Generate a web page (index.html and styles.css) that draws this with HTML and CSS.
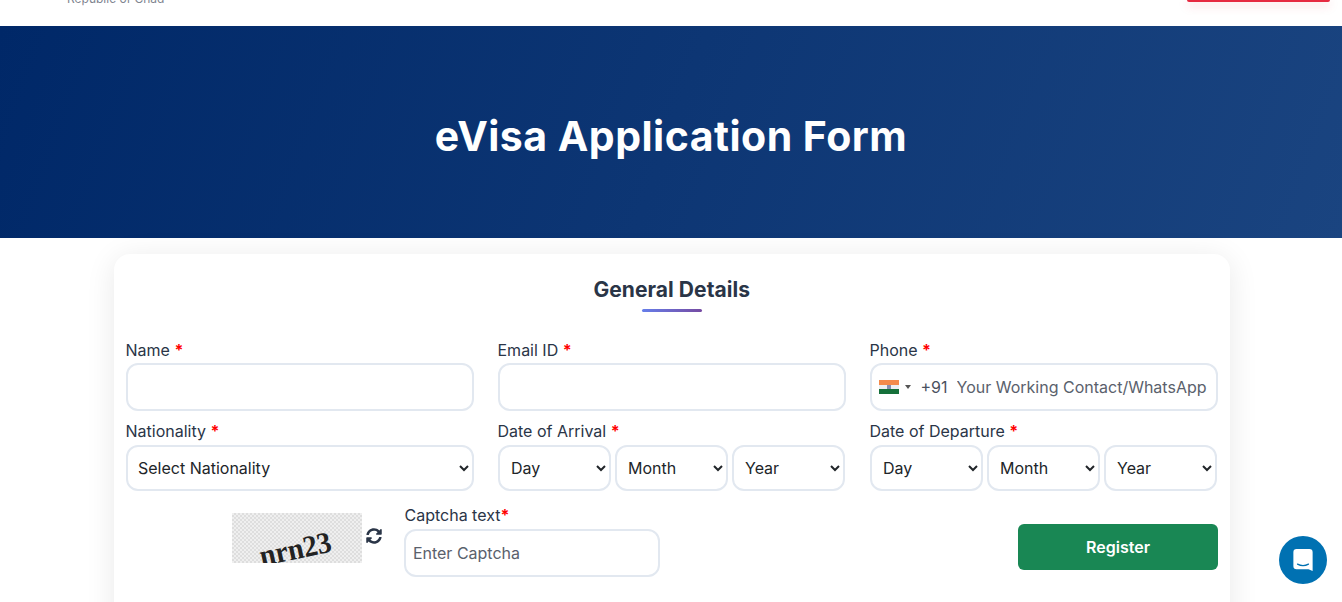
FILE: index.html
```html
<!DOCTYPE html>
<html lang="en">
  <head>
    <meta charset="UTF-8" />
    <meta name="viewport" content="width=device-width, initial-scale=1.0" />
    <title>eVisa Application Form</title>
    <link rel="stylesheet" href="styles.css">
  </head>
  <body>
    <header class="topbar">
      <div class="brand-sub">Republic of Chad</div>
      <div class="apply-btn"></div>
    </header>

    <section class="hero">
      <h1>eVisa Application Form</h1>
    </section>

    <main class="card">
      <h2 class="card-title">General Details</h2>
      <div class="title-rule"></div>

      <form class="form-grid">
        <div class="field">
          <label>Name <span class="req">*</span></label>
          <input class="control" type="text" />
        </div>
        <div class="field">
          <label>Email ID <span class="req">*</span></label>
          <input class="control" type="text" />
        </div>
        <div class="field">
          <label>Phone <span class="req">*</span></label>
          <div class="control phone">
            <span class="flag"><i class="saffron"></i><i class="white"></i><i class="green"></i></span>
            <span class="flag-arrow"></span>
            <span class="dial">+91</span>
            <input type="text" placeholder="Your Working Contact/WhatsApp" />
          </div>
        </div>

        <div class="field">
          <label>Nationality <span class="req">*</span></label>
          <select class="control select-full"><option>Select Nationality</option></select>
        </div>
        <div class="field">
          <label>Date of Arrival <span class="req">*</span></label>
          <div class="date-row">
            <select class="control"><option>Day</option></select>
            <select class="control"><option>Month</option></select>
            <select class="control"><option>Year</option></select>
          </div>
        </div>
        <div class="field">
          <label>Date of Departure <span class="req">*</span></label>
          <div class="date-row">
            <select class="control"><option>Day</option></select>
            <select class="control"><option>Month</option></select>
            <select class="control"><option>Year</option></select>
          </div>
        </div>
      </form>

      <div class="captcha-row">
        <div class="captcha-img"><span>nrn23</span></div>
        <svg class="refresh" viewBox="0 0 512 512" width="16" height="16">
          <path fill="#2a3547" d="M370.700 133.300C339.500 104 298.900 88 255.800 88c-77.500.1-144.300 53.200-162.800 126.900-1.300 5.400-6.100 9.100-11.600 9.100H24.100c-7.500 0-13.200-6.800-11.800-14.200C33.900 94.900 134.800 8 256 8c66.400 0 126.800 26.100 171.300 68.700L463 41C478.100 25.900 504 36.600 504 57.900V192c0 13.300-10.700 24-24 24H345.900c-21.400 0-32.100-25.900-17-41l41.800-41.700zM32 296h134.100c21.400 0 32.100 25.900 17 41l-41.800 41.800c31.300 29.300 71.800 45.300 114.900 45.200 77.400-.1 144.300-53.100 162.800-126.800 1.300-5.400 6.100-9.100 11.600-9.100h57.300c7.500 0 13.200 6.800 11.800 14.200C478.100 417.100 377.200 504 256 504c-66.400 0-126.800-26.100-171.300-68.700L49 471C33.900 486.100 8 475.400 8 454.100V320c0-13.300 10.700-24 24-24z"/>
        </svg>
        <div class="field captcha-field">
          <label>Captcha text<span class="req">*</span></label>
          <input class="control" type="text" placeholder="Enter Captcha" />
        </div>
        <button class="register" type="button">Register</button>
      </div>
    </main>

    <div class="chat-bubble">
      <svg viewBox="0 0 24 26">
        <path fill="#fff" d="M5 1h14a3.500 3.500 0 0 1 3.500 3.500V25l-4.500-2H5a3.500 3.500 0 0 1-3.500-3.500v-15A3.500 3.500 0 0 1 5 1z"/>
        <path fill="none" stroke="#0071b2" stroke-width="1.300" stroke-linecap="round" d="M6 17.500c3.500 2 8.500 2 12 0"/>
      </svg>
    </div>
  </body>
</html>
```

FILE: styles.css
```css
* {
  box-sizing: border-box;
}
body {
  margin: 0;
  height: 602px;
  overflow: hidden;
  font-family: Inter, "Liberation Sans", sans-serif;
  font-size: 16px;
  color: #2a3547;
  background: #fff;
}

.topbar {
  height: 26px;
  display: flex;
  justify-content: space-between;
  align-items: flex-start;
  padding: 0 12px 0 67px;
  overflow: hidden;
}
.brand-sub {
  margin-top: -8px;
  font-size: 12px;
  line-height: 14px;
  color: #7f8590;
}
.apply-btn {
  width: 143px;
  height: 2px;
  border-radius: 0 0 4px 4px;
  background: #e62a41;
  box-shadow: 0 3px 10px rgba(230, 42, 65, 0.35);
}

.hero {
  height: 212px;
  display: flex;
  align-items: center;
  justify-content: center;
  padding-top: 8px;
  background: linear-gradient(110deg, #002868 0%, #1a4480 100%);
}
.hero h1 {
  margin: 0;
  font-family: Inter, sans-serif;
  font-size: 41px;
  font-weight: 700;
  letter-spacing: 0.48px;
  color: #fff;
}

.card {
  width: 1116px;
  height: 400px;
  margin: 16px 0 0 114px;
  padding: 23px 12px 0 11.5px;
  border-radius: 16px;
  background: #fff;
  box-shadow: 0 4px 30px rgba(0, 0, 0, 0.09);
}
.card-title {
  margin: 0;
  text-align: center;
  font-size: 21px;
  line-height: 26px;
  font-weight: 700;
  letter-spacing: 0.05px;
  color: #2a3547;
}
.title-rule {
  width: 60px;
  height: 3px;
  margin: 6px auto 0;
  border-radius: 2px;
  background: linear-gradient(90deg, #667eea, #764ba2);
}

.form-grid {
  display: grid;
  grid-template-columns: repeat(3, 348px);
  column-gap: 24px;
  row-gap: 9px;
  margin-top: 27px;
}
.field label {
  display: block;
  font-size: 16px;
  line-height: 22px;
  margin-bottom: 2px;
}
.req {
  color: #f00;
  font-weight: 700;
}
.control {
  display: block;
  width: 100%;
  height: 48px;
  border: 2px solid #e2e8f0;
  border-radius: 12px;
  background: #fff;
  font-family: Inter, sans-serif;
  font-size: 16px;
  color: #212529;
  outline: none;
}
select.control {
  height: 46px;
  margin-top: 1px;
  padding: 0 6px 0 7.5px;
}
select.select-full {
  margin-top: 3px;
  padding-left: 6.5px;
}
.date-row {
  display: grid;
  grid-template-columns: repeat(3, 113px);
  column-gap: 4px;
}
input::placeholder {
  color: #5a616c;
  opacity: 1;
}

.phone {
  display: flex;
  align-items: center;
  padding-left: 7px;
}
.flag {
  display: flex;
  flex-direction: column;
  width: 20px;
  height: 14px;
}
.flag i {
  flex: 1;
  display: flex;
  justify-content: center;
}
.saffron {
  background: #f58a4b;
}
.white {
  background: #eeeef2;
}
.white::before {
  content: "";
  width: 4px;
  background: #8a8fb0;
}
.green {
  background: #15703a;
}
.flag-arrow {
  width: 0;
  height: 0;
  margin-left: 6px;
  border-left: 3px solid transparent;
  border-right: 3px solid transparent;
  border-top: 4px solid #555;
}
.dial {
  margin-left: 10px;
  color: #4a5160;
}
.phone input {
  flex: 1;
  min-width: 0;
  margin-left: 9px;
  border: 0;
  padding: 0;
  font-family: Inter, sans-serif;
  font-size: 16px;
  outline: none;
}

.captcha-row {
  display: flex;
  align-items: flex-start;
  margin-top: 13px;
  padding-left: 106.5px;
}
.captcha-img {
  width: 130px;
  height: 50px;
  margin-top: 9px;
  overflow: hidden;
  background-color: #e8e8e8;
  background-image: repeating-conic-gradient(#dedede 0 25%, #efefef 0 50%);
  background-size: 4px 4px;
  text-align: center;
}
.captcha-img span {
  display: inline-block;
  margin-top: 16px;
  margin-left: -4px;
  font-family: "Liberation Serif", serif;
  font-size: 30px;
  font-weight: 700;
  line-height: 40px;
  color: #222;
  transform: rotate(-12deg) scaleX(0.95);
}
.refresh {
  flex: none;
  margin: 24px 0 0 4px;
}
.captcha-field {
  width: 256px;
  margin-left: 21.9px;
}
.captcha-field label {
  margin-bottom: 3px;
  padding-left: 0.6px;
}
.captcha-field input {
  padding: 0 7px;
}
.register {
  width: 200px;
  height: 46px;
  margin: 20px 0 0 auto;
  border: 0;
  border-radius: 6px;
  background: #198754;
  color: #fff;
  font-family: Inter, sans-serif;
  font-size: 16px;
  font-weight: 600;
}

.chat-bubble {
  position: fixed;
  left: 1279px;
  top: 536px;
  width: 48px;
  height: 48px;
  display: flex;
  align-items: center;
  justify-content: center;
  border-radius: 50%;
  background: #0071b2;
}
.chat-bubble svg {
  width: 22px;
  height: 24px;
}
```
